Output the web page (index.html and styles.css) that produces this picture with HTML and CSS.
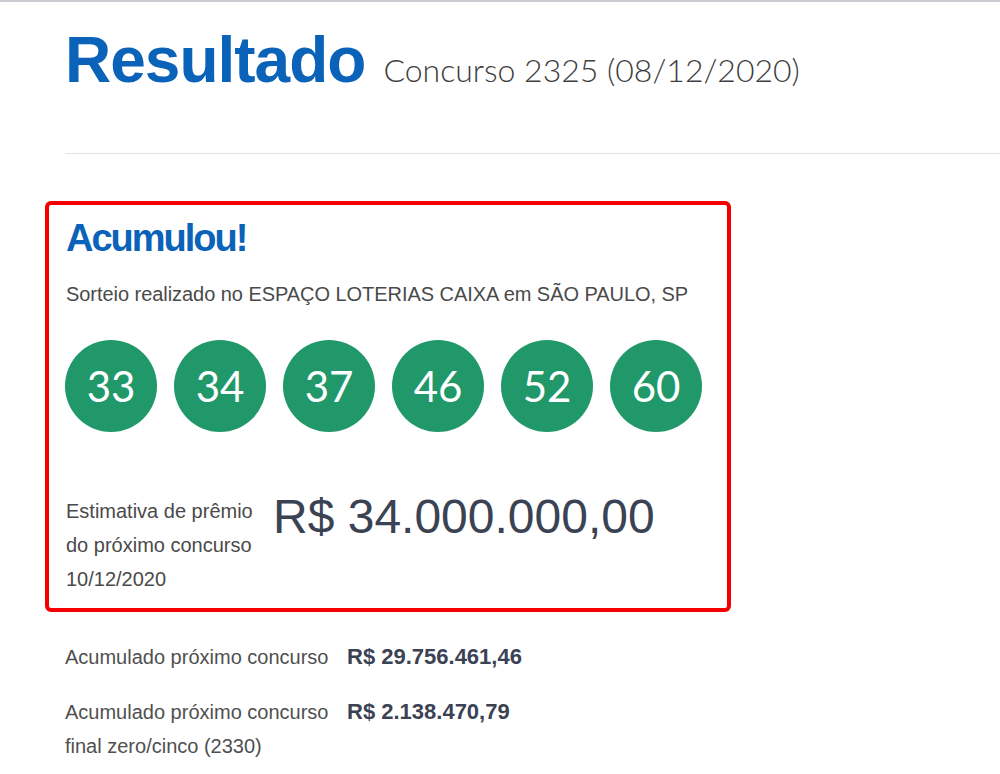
FILE: index.html
```html
<!DOCTYPE html>
<html lang="pt-BR">
<head>
<meta charset="utf-8">
<title>Resultado</title>
<link rel="stylesheet" href="styles.css">
</head>
<body>
<div class="topline"></div>
<main class="page">
  <header class="head">
    <h1 class="title">Resultado</h1>
    <span class="concurso">Concurso 2325 (08/12/2020)</span>
  </header>
  <hr class="sep">
  <section class="box">
    <h2 class="acum">Acumulou!</h2>
    <p class="local">Sorteio realizado no ESPAÇO LOTERIAS CAIXA em SÃO PAULO, SP</p>
    <ul class="balls">
      <li class="ball">33</li>
      <li class="ball">34</li>
      <li class="ball">37</li>
      <li class="ball">46</li>
      <li class="ball">52</li>
      <li class="ball">60</li>
    </ul>
    <div class="estimate">
      <p class="est-label">Estimativa de prêmio<br>do próximo concurso<br>10/12/2020</p>
      <p class="est-value">R$ 34.000.000,00</p>
    </div>
  </section>
  <div class="rows">
    <div class="row">
      <p class="row-label">Acumulado próximo concurso</p>
      <p class="row-value">R$ 29.756.461,46</p>
    </div>
    <div class="row">
      <p class="row-label">Acumulado próximo concurso<br>final zero/cinco (2330)</p>
      <p class="row-value">R$ 2.138.470,79</p>
    </div>
  </div>
</main>
</body>
</html>
```

FILE: styles.css
```css
html, body {
  margin: 0;
  padding: 0;
  background: #fff;
}
body {
  font-family: "Liberation Sans", Arial, sans-serif;
  color: #454545;
  overflow: hidden;
}
.topline {
  height: 2px;
  background: #c9ccd1;
}
.page {
  padding-left: 65px;
}
.head {
  display: flex;
  align-items: baseline;
  gap: 18px;
  height: 118px;
}
.title {
  margin: 0;
  font-family: "Liberation Sans", Arial, sans-serif;
  font-weight: 700;
  font-size: 64px;
  letter-spacing: -1px;
  line-height: 116px;
  color: #0a63b8;
}
.concurso {
  font-family: "Lato", "Liberation Sans", sans-serif;
  font-weight: 300;
  font-size: 32px;
  color: #3e3e3e;
}
.sep {
  margin: 33px 0 0 0;
  border: 0;
  height: 1px;
  background: #e3e3e3;
}
.box {
  margin: 47px 0 0 -20px;
  width: 686px;
  height: 411px;
  box-sizing: border-box;
  border: 4px solid #f50000;
  border-radius: 6px;
  padding: 11px 0 0 17px;
}
.acum {
  margin: 0;
  font-family: "Liberation Sans", Arial, sans-serif;
  font-weight: 700;
  font-size: 38px;
  letter-spacing: -2px;
  line-height: 44px;
  color: #0a63b8;
}
.local {
  margin: 22px 0 0 0;
  font-size: 20px;
  line-height: 24px;
  color: #4a4a4a;
  white-space: nowrap;
  letter-spacing: -0.05px;
}
.balls {
  list-style: none;
  margin: 34px 0 0 -1px;
  padding: 0;
  display: flex;
  gap: 17px;
}
.ball {
  width: 92px;
  height: 92px;
  border-radius: 50%;
  background: #21986a;
  color: #fff;
  display: flex;
  align-items: center;
  justify-content: center;
  font-family: "Lato", "Liberation Sans", sans-serif;
  font-weight: 400;
  font-size: 42px;
}
.estimate {
  display: flex;
  gap: 17px;
  margin-top: 62px;
}
.est-label {
  margin: 0;
  width: 190px;
  font-size: 20px;
  line-height: 34px;
  color: #4a4a4a;
  white-space: nowrap;
}
.est-value {
  margin: -5px 0 0 0;
  font-size: 48px;
  line-height: 56px;
  color: #3b4253;
  white-space: nowrap;
}
.rows {
  margin-top: 28px;
}
.row {
  display: flex;
  gap: 12px;
  margin-bottom: 21px;
}
.row-label {
  margin: 0;
  width: 270px;
  font-size: 20px;
  line-height: 34px;
  color: #505050;
  white-space: nowrap;
}
.row-value {
  margin: 0;
  font-size: 22px;
  font-weight: 700;
  line-height: 34px;
  color: #3b4253;
  white-space: nowrap;
}
```
